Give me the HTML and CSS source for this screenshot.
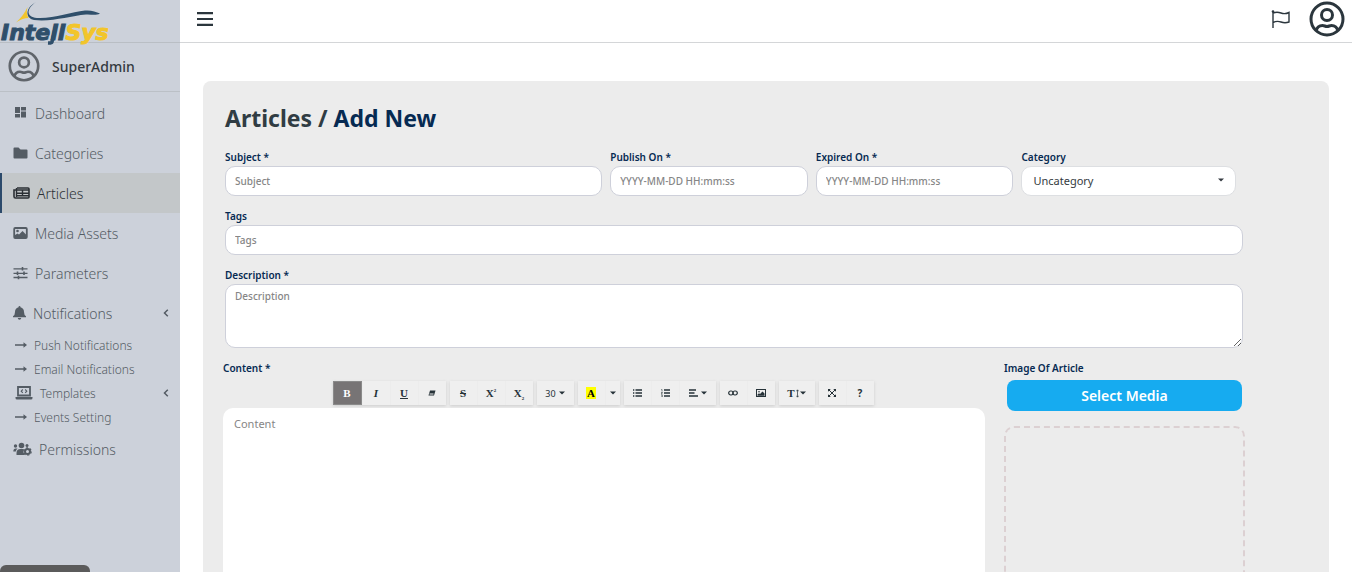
FILE: index.html
```html
<!DOCTYPE html>
<html lang="en">
<head>
<meta charset="utf-8">
<title>Articles / Add New</title>
<link rel="stylesheet" href="styles.css">
</head>
<body>
<svg class="defs" aria-hidden="true">
  <symbol id="user" viewBox="0 0 36 36"><g fill="none" stroke="currentColor" stroke-width="3"><circle cx="18" cy="18" r="16"/><circle cx="18" cy="14" r="5.500"/><path d="M7 30c1-4 4-5.500 6.500-5.500 2 0 2.500 1 4.500 1s2.500-1 4.500-1c2.500 0 5.500 1.500 6.500 5.500"/></g></symbol>
  <symbol id="arrow" viewBox="0 0 12 8"><path d="M0 3.300h8.500V1.200L12 4 8.500 6.800V4.700H0z" fill="currentColor"/></symbol>
  <symbol id="chevron" viewBox="0 0 6 8"><path d="M4.800 .8 1.500 4l3.300 3.200" fill="none" stroke="currentColor" stroke-width="1.500"/></symbol>
  <symbol id="caret" viewBox="0 0 6 4"><path d="M0 .5h6L3 3.500z" fill="currentColor"/></symbol>
</svg>
<div class="app">
  <aside class="sidebar">
    <a class="brand" href="#" aria-label="InteliSys">
      <svg class="logo" viewBox="0 0 112 46">
        <path d="M36 2C26 9 26 17 37 18c16 1 34-6 48-7.500 6-.5 11 1 15 3-5 2.500-9 .5-14 1C70 16 52 22 34 20 25 18 25 8 36 2z" fill="#2f4f6b"/>
        <path d="M27.500 7c-1 4-1 8 1 11-4 0-9 2-12.500 4.500C21 18 25 13 27.500 7z" fill="#f2c52b"/>
        <text x="1" y="39.500" class="logo-text" fill="#2f4f6b" stroke="#2f4f6b">Inteli<tspan fill="#f2c52b" stroke="#f2c52b">Sys</tspan></text>
        <path d="M56 25l-4 17q-.5 1.200-4 1" stroke="#2f4f6b" stroke-width="3.500" fill="none"/>
      </svg>
    </a>
    <div class="account"><svg class="avatar"><use href="#user"/></svg><span>SuperAdmin</span></div>
    <nav class="nav">
      <a class="item" href="#"><svg class="ico" viewBox="0 0 15 14"><path d="M2 1h5v6H2zM8 1h5v3.500H8zM8 5.500h5v6H8zM2 8h5v3.500H2z" fill="currentColor"/></svg>Dashboard</a>
      <a class="item" href="#"><svg class="ico" viewBox="0 0 15 14"><path d="M1.500 1.500h4L7.500 3.500h6q1 0 1 1v7q0 1-1 1h-12q-1 0-1-1v-9q0-1 1-1z" fill="currentColor"/></svg>Categories</a>
      <a class="item active" href="#"><svg class="ico wide" viewBox="0 0 17 14"><path d="M4 2h11q1 0 1 1v8q0 1-1 1H2.500Q1 12 1 10.500V4h2" fill="none" stroke="currentColor" stroke-width="1.600"/><path d="M3.500 2v9M4 4h12M4 7.300h12M4 9.800h12M9.500 4v6" stroke="currentColor" stroke-width="1.400"/></svg>Articles</a>
      <a class="item" href="#"><svg class="ico" viewBox="0 0 15 14"><rect x="1.200" y="2" width="12.600" height="10" rx="1" fill="none" stroke="currentColor" stroke-width="1.800"/><circle cx="4.500" cy="5" r="1.300" fill="currentColor"/><path d="M2 11V9l2.500-1.500L6 8.500 9.500 5l4 4v2z" fill="currentColor"/></svg>Media Assets</a>
      <a class="item" href="#"><svg class="ico" viewBox="0 0 15 14"><path d="M.5 2.800h14M.5 7.300h14M.5 11.500h14" stroke="currentColor" stroke-width="1.300"/><path d="M9.500 1v3.600M4.500 5.500v3.600M11 5.500v3.600M5.500 9.700v3.600" stroke="currentColor" stroke-width="1.600"/></svg>Parameters</a>
      <a class="item" href="#"><svg class="ico bell" viewBox="0 0 13 14"><path d="M6.500 0q1 0 1 1.200Q11 2.200 11 6q0 3 2 4.300v1H0v-1Q2 9 2 6q0-3.800 3.500-4.800Q5.500 0 6.500 0zM4.700 12.100h3.600q-.3 1.700-1.800 1.700t-1.800-1.700z" fill="currentColor"/></svg>Notifications<svg class="chev"><use href="#chevron"/></svg></a>
      <div class="submenu">
        <a class="sub" href="#"><svg class="arrow"><use href="#arrow"/></svg>Push Notifications</a>
        <a class="sub" href="#"><svg class="arrow"><use href="#arrow"/></svg>Email Notifications</a>
        <a class="sub" href="#"><svg class="laptop" viewBox="0 0 18 14"><path d="M3 9.500V1h12v8.500z" fill="none" stroke="currentColor" stroke-width="1.800"/><path d="M7.800 3.500 6.200 5.200l1.600 1.700M10.200 3.500l1.600 1.700-1.600 1.700" fill="none" stroke="currentColor" stroke-width="1.100"/><path d="M.5 11h17v1q0 1.500-1.500 1.500H2Q.5 13.500.5 12z" fill="currentColor"/></svg>Templates<svg class="chev"><use href="#chevron"/></svg></a>
        <a class="sub" href="#"><svg class="arrow"><use href="#arrow"/></svg>Events Setting</a>
      </div>
      <a class="item" href="#"><svg class="ico people" viewBox="0 0 19 14"><g fill="currentColor"><circle cx="8.500" cy="3.500" r="2.800"/><circle cx="2.500" cy="4" r="1.700"/><circle cx="14" cy="3.500" r="1.500"/><path d="M3.500 13v-2q0-4 4-4h2q1 0 1.500.3-1.500 3 1 5.700zM.3 9.500q0-3 2.500-3h1.700q-1.500 1.300-1.700 3z"/></g><circle cx="14.500" cy="9.500" r="2.500" fill="none" stroke="currentColor" stroke-width="2"/><circle cx="14.500" cy="9.500" r="3.700" fill="none" stroke="currentColor" stroke-width="1.200" stroke-dasharray="2 1.870"/></svg>Permissions</a>
    </nav>
    <div class="status"></div>
  </aside>
  <div class="page">
    <header class="topbar">
      <button class="plain" type="button" aria-label="Menu"><svg class="burger" viewBox="0 0 16 14"><path d="M0 1.200h16M0 7h16M0 12.800h16" stroke="currentColor" stroke-width="2.200"/></svg></button>
      <div class="tools">
        <button class="plain" type="button" aria-label="Language"><svg class="flag" viewBox="0 0 20 20"><path d="M2 2v17M2 4q4-1.500 8 0t8-.5v9.500q-4 1.500-8 0t-8 .5" fill="none" stroke="currentColor" stroke-width="1.400"/><circle cx="2" cy="2.500" r="1.300" fill="currentColor"/></svg></button>
        <button class="plain" type="button" aria-label="Profile"><svg class="profile"><use href="#user"/></svg></button>
      </div>
    </header>
    <main class="main">
      <form class="card">
        <h1>Articles / <span>Add New</span></h1>
        <div class="row">
          <div class="field"><label for="subject">Subject *</label><input id="subject" type="text" placeholder="Subject"></div>
          <div class="field"><label for="publish">Publish On *</label><input id="publish" type="text" placeholder="YYYY-MM-DD HH:mm:ss"></div>
          <div class="field"><label for="expired">Expired On *</label><input id="expired" type="text" placeholder="YYYY-MM-DD HH:mm:ss"></div>
          <div class="field"><label for="category">Category</label><div class="select"><select id="category"><option>Uncategory</option></select><svg class="caret"><use href="#caret"/></svg></div></div>
        </div>
        <div class="field"><label for="tags">Tags</label><input id="tags" type="text" placeholder="Tags"></div>
        <div class="field"><label for="description">Description *</label><textarea id="description" class="description" placeholder="Description"></textarea></div>
        <div class="columns">
          <div class="editor">
            <label for="content">Content *</label>
            <div class="toolbar">
              <div class="group">
                <button type="button" class="on"><b>B</b></button>
                <button type="button"><i>I</i></button>
                <button type="button"><u>U</u></button>
                <button type="button" aria-label="Clear"><svg width="8" height="8" viewBox="0 0 8 8"><path d="M2 1.500h5.500L6 6.500H.5z" fill="currentColor"/><path d="M1.500 5h4" stroke="#eee"/></svg></button>
              </div>
              <div class="group">
                <button type="button"><s>S</s></button>
                <button type="button"><span>X<sup>2</sup></span></button>
                <button type="button"><span>X<sub>2</sub></span></button>
              </div>
              <div class="group">
                <button type="button" class="drop size">30<svg class="caret"><use href="#caret"/></svg></button>
              </div>
              <div class="group">
                <button type="button"><span class="mark">A</span></button>
                <button type="button" class="narrow" aria-label="More colors"><svg class="caret"><use href="#caret"/></svg></button>
              </div>
              <div class="group">
                <button type="button" aria-label="Bulleted list"><svg width="9" height="8" viewBox="0 0 9 8"><path d="M2.500 1H9M2.500 4H9M2.500 7H9M0 1h1.300M0 4h1.300M0 7h1.300" stroke="currentColor" stroke-width="1.300"/></svg></button>
                <button type="button" aria-label="Numbered list"><svg width="9" height="8" viewBox="0 0 9 8"><path d="M3 1h6M3 4h6M3 7h6" stroke="currentColor" stroke-width="1.300"/><path d="M.3.500h.7V2.500M0 3.500h1.500L.3 5h1.200M0 6h1.300v2H0" fill="none" stroke="currentColor" stroke-width=".6"/></svg></button>
                <button type="button" class="drop" aria-label="Align"><svg width="9" height="8" viewBox="0 0 9 8"><path d="M0 1h7M0 4h5.500M0 7h9" stroke="currentColor" stroke-width="1.300"/></svg><svg class="caret"><use href="#caret"/></svg></button>
              </div>
              <div class="group">
                <button type="button" aria-label="Link"><svg width="10" height="6" viewBox="0 0 10 6"><g fill="none" stroke="currentColor" stroke-width="1.200"><rect x=".7" y="1" width="4.500" height="4" rx="2"/><rect x="4.800" y="1" width="4.500" height="4" rx="2"/></g></svg></button>
                <button type="button" aria-label="Picture"><svg width="10" height="8" viewBox="0 0 10 8"><rect x=".5" y=".5" width="9" height="7" fill="none" stroke="currentColor"/><circle cx="3" cy="2.700" r=".8" fill="currentColor"/><path d="M1.500 6.800V5.500L3 4.300l1 .8 2.500-2.500 2 2v2.200z" fill="currentColor"/></svg></button>
              </div>
              <div class="group">
                <button type="button" class="drop tight" aria-label="Line height"><b>T</b><svg width="3" height="9" viewBox="0 0 3 9"><path d="M1.500 1v7M.3 2.300 1.500.8l1.200 1.500M.3 6.700l1.200 1.500 1.200-1.500" fill="none" stroke="currentColor" stroke-width=".7"/></svg><svg class="caret"><use href="#caret"/></svg></button>
              </div>
              <div class="group">
                <button type="button" aria-label="Fullscreen"><svg width="8" height="8" viewBox="0 0 8 8"><path d="M1 1l6 6M7 1 1 7" stroke="currentColor"/><path d="M0 0h2.800L0 2.800zM8 0v2.800L5.200 0zM0 8V5.200L2.800 8zM8 8H5.200L8 5.200z" fill="currentColor"/></svg></button>
                <button type="button" class="help">?</button>
              </div>
            </div>
            <textarea id="content" class="content" placeholder="Content"></textarea>
          </div>
          <div class="media">
            <span class="label">Image Of Article</span>
            <button type="button" class="pick">Select Media</button>
            <div class="drop-zone"></div>
          </div>
        </div>
      </form>
    </main>
  </div>
</div>
</body>
</html>
```
FILE: styles.css
```css
* { box-sizing: border-box; }
body {
  margin: 0;
  font-family: "Noto Sans", "Open Sans", sans-serif;
  color: #343a40;
  background: #fff;
}
.defs { position: absolute; width: 0; height: 0; }
svg { display: block; flex: none; }
a { color: inherit; text-decoration: none; }
button, input, select, textarea { font-family: inherit; }
.app { display: flex; height: 100vh; overflow: hidden; }

.sidebar {
  position: relative;
  flex: none;
  width: 180px;
  background: #ccd1da;
  color: #545c64;
}
.brand { display: block; height: 43px; border-bottom: 1px solid #b9bec4; }
.logo { width: 112px; height: 46px; }
.logo-text { font: italic bold 22px "DejaVu Sans", sans-serif; stroke-width: 1px; }
.account {
  display: flex;
  align-items: center;
  gap: 12px;
  height: 49px;
  padding: 0 8px 2px;
  border-bottom: 1px solid #bbc0c6;
  font-size: 14px;
  font-weight: 500;
  color: #343a40;
}
.avatar { width: 32px; height: 32px; color: #60656b; }
.nav { padding-top: 1px; }
.item {
  display: flex;
  align-items: center;
  gap: 7px;
  height: 40px;
  padding: 0 11px 0 13px;
  font-size: 14px;
  font-weight: 300;
}
.item.active {
  padding-left: 11px;
  border-left: 2px solid #2c4a6b;
  background: #c3c7c9;
  color: #2b3035;
}
.ico { width: 15px; height: 14px; }
.ico.wide { width: 17px; }
.ico.bell { width: 13px; }
.ico.people { width: 19px; }
.chev { width: 6px; height: 8px; margin-left: auto; }
.sub {
  display: flex;
  align-items: center;
  gap: 7px;
  height: 24px;
  padding: 0 11px 0 15px;
  font-size: 12px;
  font-weight: 300;
}
.arrow { width: 12px; height: 8px; }
.laptop { width: 18px; height: 14px; }
.status {
  position: absolute;
  left: 0;
  bottom: 0;
  width: 90px;
  height: 7px;
  border-radius: 6px 6px 0 0;
  background: #5b5b5b;
}

.page { display: flex; flex: 1; flex-direction: column; min-width: 0; }
.topbar {
  display: flex;
  flex: none;
  align-items: center;
  justify-content: space-between;
  height: 43px;
  padding: 0 7px 4px 17px;
  border-bottom: 1px solid #d4d6d8;
}
.plain { padding: 0; border: 0; background: none; color: #2b363d; }
.tools { display: flex; align-items: center; gap: 18px; }
.burger { width: 16px; height: 14px; }
.flag { width: 20px; height: 20px; }
.profile { width: 36px; height: 36px; }
.main { flex: 1; min-height: 0; padding: 38px 23px 0; overflow: hidden; }

.card {
  display: flex;
  flex-direction: column;
  gap: 12px;
  min-height: 100%;
  padding: 21px 86px 22px 22px;
  border-radius: 8px;
  background: #ececec;
}
h1 { margin: 0 0 3px; font-size: 23px; line-height: 32px; color: #303c43; }
h1 span { color: #062a52; }
.row {
  display: grid;
  grid-template-columns: 378fr 198fr 198fr 215fr;
  gap: 8px;
  padding-right: 7px;
}
.field { display: flex; flex-direction: column; min-width: 0; }
label, .label { font-size: 10px; font-weight: 600; line-height: 17px; color: #062a52; }
input, .description, select {
  width: 100%;
  height: 30px;
  padding: 0 9px;
  border: 1px solid #ced0da;
  border-radius: 10px;
  background: #fff;
  font-size: 10px;
  font-weight: 500;
  color: #343a40;
}
::placeholder { color: #868686; opacity: 1; }
.description { display: block; height: 64px; padding: 4px 9px; }
.select { position: relative; }
select { appearance: none; padding: 0 11px 2px; border-color: #dddfe2; font-size: 11px; font-weight: 400; }
.caret { width: 6px; height: 4px; }
.select .caret { position: absolute; right: 12px; top: 12px; }

.columns { display: flex; gap: 19px; margin: 0 -2px; }
.editor { display: flex; flex: 762; flex-direction: column; }
.toolbar { display: flex; justify-content: center; gap: 4px; padding: 4px 2px 3px 0; }
.group { display: flex; gap: 1px; box-shadow: 0 1px 3px #ccc; }
.group button {
  display: flex;
  align-items: center;
  justify-content: center;
  gap: 3px;
  width: 27px;
  height: 24px;
  padding: 0;
  border: 0;
  background: #efefef;
  font: bold 11px "Liberation Serif", serif;
  color: #263238;
}
.group .on { width: 29px; border: 1px solid #8a8a8a; background: #777475; color: #fff; }
.group .drop { width: 36px; }
.group .tight { gap: 1px; }
.group .narrow { width: 14px; }
.group .size { width: 37px; font: 9px "Noto Sans", sans-serif; }
.group .help { font: bold 10px "Noto Sans", sans-serif; }
.mark { padding: 0 1px; background: #ff0; color: #000; }
sup, sub { font-size: 5px; line-height: 0; }
.content {
  display: block;
  width: 100%;
  height: 300px;
  padding: 8px 11px;
  border: 0;
  border-radius: 10px 10px 0 0;
  background: #fff;
  font-size: 11px;
  resize: none;
}
.media { display: flex; flex: 241; flex-direction: column; }
.pick {
  height: 31px;
  margin: 3px 3px 15px;
  padding: 0;
  border: 0;
  border-radius: 8px;
  background: #16abf0;
  color: #fff;
  font-size: 14px;
  font-weight: 600;
}
.drop-zone { height: 240px; border: 2px dashed #dcd0d2; border-radius: 10px; }
```
